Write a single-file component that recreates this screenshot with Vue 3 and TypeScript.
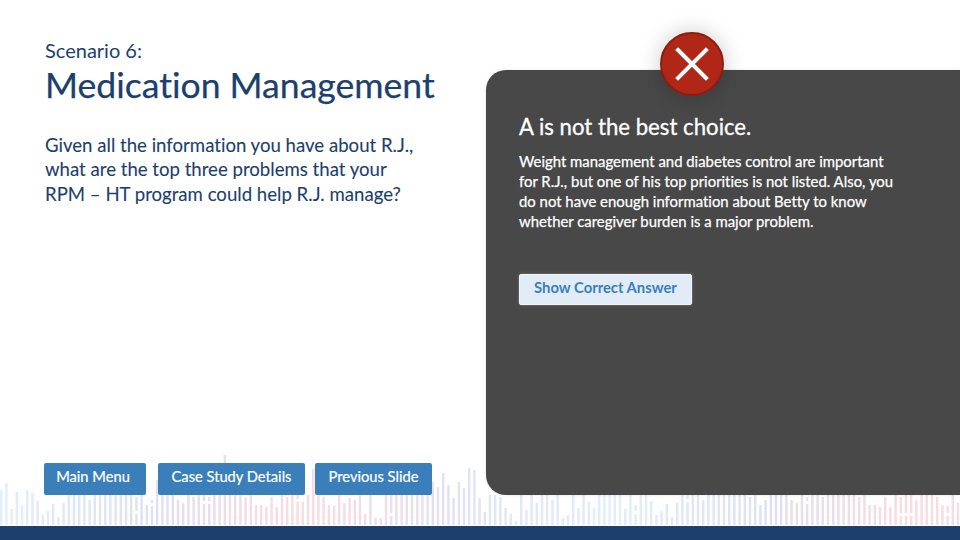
<script setup lang="ts">
const heights: number[] = [35,42,16,33,20,35,32,24,10,14,21,8,22,30,30,30,30,25,30,30,30,30,30,30,30,30,28,30,20,25,45,30,30,30,25,22,30,28,30,30,28,30,30,70,30,30,30,28,30,20,20,18,28,18,30,28,30,30,25,30,56,50,
28,20,19,30,22,27,25,30,11,30,7,7,30,30,30,30,30,30,30,30,43,43,38,52,40,27,43,37,57,55,27,13,30,30,28,17,11,4,30,15,30,22,30,30,25,30,7,10,30,17,30,23,17,30,30,30];
const pitch = 5.2;
const stops: [number, number[]][] = [
  [0, [224, 239, 251]],
  [0.25, [222, 225, 240]],
  [0.5, [252, 218, 225]],
  [0.72, [226, 225, 241]],
  [1, [224, 239, 251]],
];
function colorAt(t: number): string {
  for (let i = 1; i < stops.length; i++) {
    if (t <= stops[i][0]) {
      const [a, ca] = stops[i - 1];
      const [b, cb] = stops[i];
      const k = (t - a) / (b - a);
      const c = ca.map((v, j) => Math.round(v + (cb[j] - v) * k));
      return `rgb(${c[0]},${c[1]},${c[2]})`;
    }
  }
  return "rgb(224,239,251)";
}
const bars = Array.from({ length: 186 }, (_, i) => {
  const h = heights[i % heights.length];
  const t = (i % heights.length) / heights.length;
  return { x: i * pitch, y: 85 - h, h, fill: colorAt(t) };
});
// small white breaks that interrupt some of the bars: [bar index, distance from the baseline]
const breaks: [number, number][] = [[26, 14], [29, 22], [39, 24], [40, 24], [57, 26], [58, 26], [72, 20], [75, 12], [122, 14], [132, 26], [155, 24], [173, 12], [174, 12], [175, 12], [182, 12]];
const buttons = ["Main Menu", "Case Study Details", "Previous Slide"];
</script>

<template>
  <div class="slide">
    <svg class="wave" width="960" height="86" viewBox="0 0 960 86" aria-hidden="true">
      <rect v-for="(b, i) in bars" :key="i" :x="b.x" :y="b.y" width="2.4" :height="b.h" :fill="b.fill" />
      <rect v-for="(n, i) in breaks" :key="'n' + i" :x="n[0] * pitch - 0.5" :y="85 - n[1]" width="3.4" height="3" fill="#fff" />
    </svg>
    <div class="main">
      <section class="left">
        <div class="eyebrow">Scenario 6:</div>
        <h1 class="title">Medication Management</h1>
        <p class="question">Given all the information you have about R.J.,<br />what are the top three problems that your<br />RPM – HT program could help R.J. manage?</p>
        <nav class="nav">
          <button v-for="b in buttons" :key="b" class="nav-btn">{{ b }}</button>
        </nav>
      </section>
      <section class="panel">
        <div class="badge">
          <svg width="36" height="36" viewBox="0 0 36 36" aria-hidden="true">
            <path d="M4 4 L32 32 M32 4 L4 32" stroke="#fff" stroke-width="4" stroke-linecap="square" fill="none" />
          </svg>
        </div>
        <h2 class="verdict">A is not the best choice.</h2>
        <p class="explain">Weight management and diabetes control are important<br />for R.J., but one of his top priorities is not listed. Also, you<br />do not have enough information about Betty to know<br />whether caregiver burden is a major problem.</p>
        <button class="answer">Show Correct Answer</button>
      </section>
    </div>
    <div class="footer"></div>
  </div>
</template>

<style>
html, body { margin: 0; background: #fff; }
</style>

<style scoped>
.slide {
  position: relative;
  width: 960px;
  height: 540px;
  overflow: hidden;
  display: flex;
  flex-direction: column;
  background: #fff;
  font-family: "Lato", "Liberation Sans", sans-serif;
  font-variant-ligatures: none;
}
.wave {
  position: absolute;
  left: 0;
  top: 440px;
}
.main {
  position: relative;
  flex: 1;
  display: flex;
  padding-bottom: 31px;
}
.left {
  width: 486px;
  box-sizing: border-box;
  padding: 38px 0 0 45px;
  display: flex;
  flex-direction: column;
  color: #1c3f6e;
}
.eyebrow {
  font-size: 20px;
  line-height: 24px;
}
.title {
  margin: 2px 0 0;
  font-size: 35.6px;
  line-height: 42px;
  font-weight: 400;
  -webkit-text-stroke: 0.25px #1c3f6e;
}
.question {
  margin: 27px 0 0;
  font-size: 18.6px;
  line-height: 24.3px;
  -webkit-text-stroke: 0.1px #1c3f6e;
}
.nav {
  margin-top: auto;
  margin-left: -1px;
  display: flex;
}
.nav-btn {
  height: 32px;
  padding: 0 0 6px;
  border: none;
  border-radius: 2px;
  background: #3b7fba;
  color: #fff;
  font: 400 14.7px "Lato", "Liberation Sans", sans-serif;
  font-variant-ligatures: none;
  -webkit-text-stroke: 0.2px #fff;
}
.nav-btn:nth-child(1) {
  width: 102px;
  padding-right: 4px;
}
.nav-btn:nth-child(2) {
  width: 147px;
  margin-left: 12px;
}
.nav-btn:nth-child(3) {
  width: 117px;
  margin-left: 10px;
}
.panel {
  position: relative;
  flex: 1;
  margin-top: 70px;
  box-sizing: border-box;
  padding: 43px 0 0 33px;
  border-radius: 20px 0 0 20px;
  background: rgba(68, 68, 68, 0.98);
  color: #fff;
  box-shadow: 0 0 3px rgba(0, 0, 0, 0.12);
}
.badge {
  position: absolute;
  left: 174px;
  top: -38px;
  width: 60px;
  height: 60px;
  border: 2px solid #8b1d11;
  border-radius: 50%;
  background: #b12717;
  display: flex;
  align-items: center;
  justify-content: center;
  box-shadow: 0 0 22px rgba(0, 0, 0, 0.22);
}
.verdict {
  margin: 0;
  font-size: 22.2px;
  line-height: 28px;
  font-weight: 400;
  -webkit-text-stroke: 0.3px #fff;
}
.explain {
  margin: 10px 0 0;
  font-size: 14.9px;
  line-height: 20.1px;
  font-weight: 400;
  -webkit-text-stroke: 0.25px #fff;
}
.answer {
  margin-top: 43px;
  width: 173px;
  height: 31px;
  padding: 0 0 6px;
  border: 1px solid #f2f6fb;
  border-radius: 2px;
  background: #e2ecf7;
  color: #3b7fba;
  font: 700 14.8px "Lato", "Liberation Sans", sans-serif;
  font-variant-ligatures: none;
  display: block;
  box-shadow: 0 0 3px rgba(255, 255, 255, 0.3);
}
.footer {
  position: relative;
  height: 14px;
  background: #1c3f6e;
}
</style>
